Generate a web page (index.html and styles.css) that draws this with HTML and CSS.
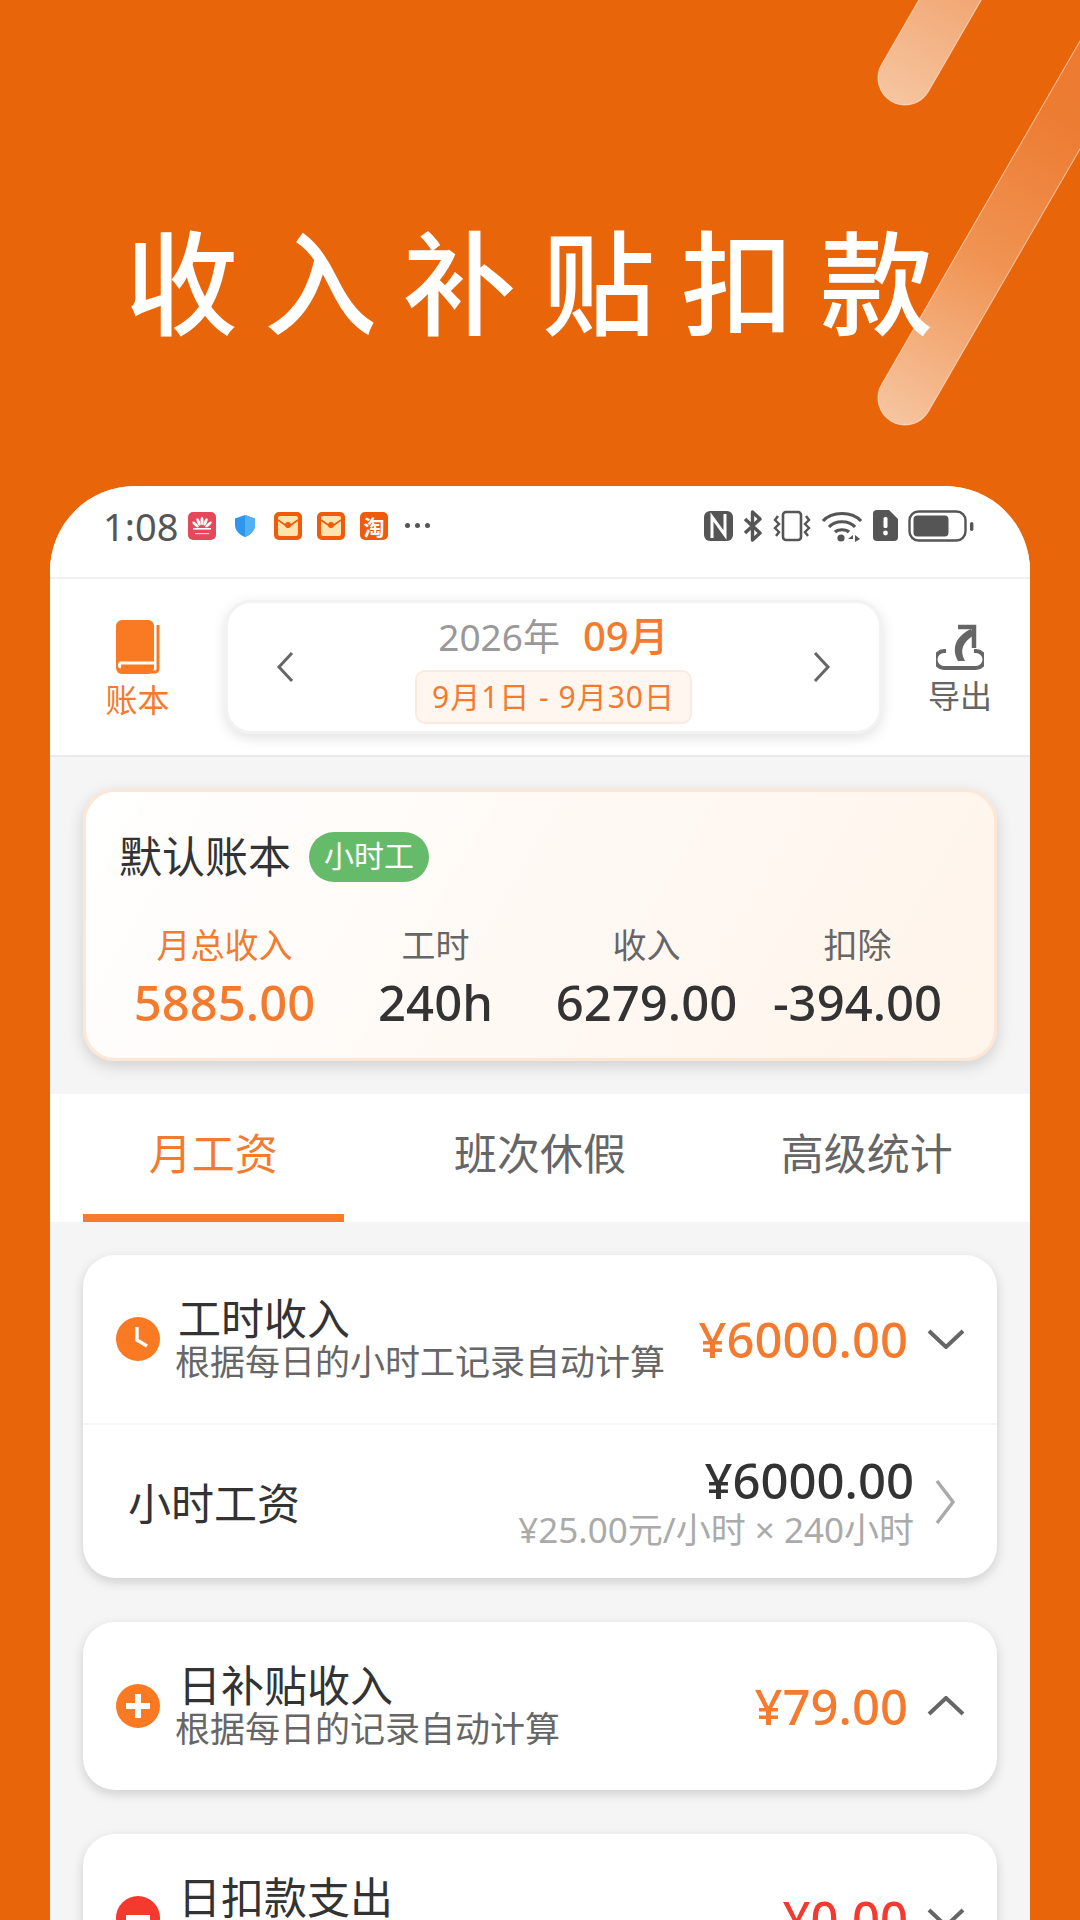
FILE: index.html
```html
<!DOCTYPE html>
<html lang="zh-CN">
<head>
  <meta charset="UTF-8" />
  <meta name="viewport" content="width=device-width, initial-scale=1" />
  <title>收入补贴扣款</title>
  <link rel="stylesheet" href="styles.css">
</head>
<body>

<header class="hero">
  <svg class="stripes" viewBox="0 0 1080 486">
    <defs>
      <linearGradient id="stripe-short" x1="0" y1="1" x2="0" y2="0">
        <stop offset="0" stop-color="#f6c5a0" />
        <stop offset="1" stop-color="#ed8a48" />
      </linearGradient>
      <linearGradient id="stripe-long" x1="0" y1="1" x2="0" y2="0">
        <stop offset="0" stop-color="#f6c5a0" />
        <stop offset="0.3" stop-color="#f09352" />
        <stop offset="0.55" stop-color="#ed7c33" />
        <stop offset="1" stop-color="#ec762a" />
      </linearGradient>
    </defs>
    <rect class="stripe-rect" transform="translate(905 78) rotate(30)" x="-27" y="-230" width="54" height="257" rx="27" fill="url(#stripe-short)" />
    <rect class="stripe-rect" transform="translate(905 398) rotate(30)" x="-27" y="-600" width="54" height="627" rx="27" fill="url(#stripe-long)" />
  </svg>
  <h1>收入补贴扣款</h1>
</header>

<main class="phone">
  <div class="status-bar">
    <div class="status-left">
      <span class="time">1:08</span>
      <svg class="note" viewBox="0 0 28 28">
        <rect width="28" height="28" rx="5" fill="#e5485a" />
        <g fill="#fff">
          <ellipse cx="14" cy="9" rx="1.5" ry="4" />
          <ellipse cx="10.5" cy="10" rx="1.5" ry="4" transform="rotate(-22 10.5 10)" />
          <ellipse cx="17.5" cy="10" rx="1.5" ry="4" transform="rotate(22 17.5 10)" />
          <ellipse cx="7.5" cy="12.5" rx="1.5" ry="4" transform="rotate(-48 7.5 12.5)" />
          <ellipse cx="20.5" cy="12.5" rx="1.5" ry="4" transform="rotate(48 20.5 12.5)" />
          <rect x="5" y="16" width="18" height="1.6" />
          <rect x="7" y="21" width="14" height="1.2" opacity="0.7" />
        </g>
      </svg>
      <svg class="note shield" viewBox="0 0 20 22">
        <path d="M10 0 L20 3.5 V10 C20 16 15 20 10 22 C5 20 0 16 0 10 V3.5 Z" fill="#2f96ee" />
        <path d="M10 0 L20 3.5 V10 C20 16 15 20 10 22 Z" fill="#52b0f5" />
      </svg>
      <svg class="note" viewBox="0 0 28 28">
        <rect width="28" height="28" rx="5" fill="#f05a0a" />
        <rect x="4" y="4" width="20" height="20" rx="2" fill="#fde4ae" />
        <path d="M4 8 L14 15 L24 8" fill="none" stroke="#f05a0a" stroke-width="1.6" />
        <circle cx="14" cy="13" r="3" fill="#f05a0a" />
      </svg>
      <svg class="note" viewBox="0 0 28 28">
        <rect width="28" height="28" rx="5" fill="#f05a0a" />
        <rect x="4" y="4" width="20" height="20" rx="2" fill="#fde4ae" />
        <path d="M4 8 L14 15 L24 8" fill="none" stroke="#f05a0a" stroke-width="1.6" />
        <circle cx="14" cy="13" r="3" fill="#f05a0a" />
      </svg>
      <span class="taobao">淘</span>
      <span class="more"><i></i><i></i><i></i></span>
    </div>
    <div class="status-right">
      <svg class="sys nfc" viewBox="0 0 29 30">
        <rect width="29" height="30" rx="6" fill="#555" />
        <path d="M8 27 V6 L21 24 V3" fill="none" stroke="#fff" stroke-width="3" />
      </svg>
      <svg class="sys bt" viewBox="0 0 20 32">
        <path d="M2 9 L17 23 L9.5 30 V2 L17 9 L2 23" fill="none" stroke="#555" stroke-width="3.4" stroke-linejoin="round" />
      </svg>
      <svg class="sys vibrate" viewBox="0 0 38 32">
        <rect x="10" y="2" width="18" height="28" rx="3" fill="none" stroke="#555" stroke-width="2.6" />
        <path d="M5 6 L2 10 L6 14 L2 18 L6 22 L3 26 M33 6 L36 10 L32 14 L36 18 L32 22 L35 26" fill="none" stroke="#555" stroke-width="2.4" />
      </svg>
      <svg class="sys wifi" viewBox="0 0 42 32">
        <path d="M2 11 C11 1 31 1 40 11 M8 17 C14 10 28 10 34 17 M14 22 C17 19 25 19 28 22" fill="none" stroke="#555" stroke-width="3.2" />
        <circle cx="20" cy="28" r="3.6" fill="#555" />
        <path d="M32 25 L27 29 L32 29 Z M34 25 L39 29 L34 32 Z" fill="#555" />
      </svg>
      <svg class="sys sim" viewBox="0 0 25 31">
        <path d="M4 0 H16 L25 9 V27 A4 4 0 0 1 21 31 H4 A4 4 0 0 1 0 27 V4 A4 4 0 0 1 4 0 Z" fill="#555" />
        <rect x="10.5" y="7" width="4" height="11" rx="1.5" fill="#fff" />
        <circle cx="12.5" cy="23" r="2.4" fill="#fff" />
      </svg>
      <svg class="sys battery" viewBox="0 0 66 32">
        <rect x="1.5" y="1.5" width="56" height="29" rx="9" fill="none" stroke="#555" stroke-width="2.4" />
        <rect x="5.5" y="5.5" width="35" height="21" rx="4" fill="#555" />
        <rect x="62" y="12" width="3.4" height="9" rx="1.7" fill="#555" />
      </svg>
    </div>
  </div>

  <div class="top-nav">
    <div class="nav-btn nav-btn-left active">
      <svg class="book" viewBox="0 0 44 54">
        <rect x="0" y="0" width="38" height="54" rx="6" fill="#f97a22" />
        <rect x="38" y="5" width="6" height="47" fill="#fff" />
        <path d="M42 5 V49 A3 3 0 0 1 39 52 H6" fill="none" stroke="#f97a22" stroke-width="3" />
        <path d="M5 47 A1 1 0 0 1 6 43 H38" fill="none" stroke="#fff" stroke-width="3" />
      </svg>
      <span>账本</span>
    </div>
    <div class="date-box">
      <svg class="date-arrow" viewBox="0 0 18 32"><path d="M16 2 L3 16 L16 30" /></svg>
      <div class="date-mid">
        <div class="date-line"><span class="year">2026年</span><span class="month">09月</span></div>
        <div class="range">9月1日 - 9月30日</div>
      </div>
      <svg class="date-arrow" viewBox="0 0 18 32"><path d="M2 2 L15 16 L2 30" /></svg>
    </div>
    <div class="nav-btn nav-btn-right">
      <svg class="export" viewBox="0 0 48 46">
        <path d="M10 27 H8 A8 8 0 0 0 8 44 H40 A8 8 0 0 0 40 27 H38" fill="none" stroke="#666" stroke-width="4" />
        <path d="M22 3 H38 V24" fill="none" stroke="#666" stroke-width="4.5" />
        <path d="M35 5 C20 12 15 24 22 37 L29 37 C23 26 27 18 38 11 Z" fill="#666" />
      </svg>
      <span>导出</span>
    </div>
  </div>

  <section class="summary-wrap">
    <div class="summary">
      <div class="summary-head">
        <span class="book-name">默认账本</span>
        <span class="badge">小时工</span>
      </div>
      <div class="summary-grid">
        <div class="stat accent"><span>月总收入</span><b>5885.00</b></div>
        <div class="stat"><span>工时</span><b>240h</b></div>
        <div class="stat"><span>收入</span><b>6279.00</b></div>
        <div class="stat"><span>扣除</span><b>-394.00</b></div>
      </div>
    </div>
  </section>

  <nav class="tabs">
    <div class="tab current">月工资</div>
    <div class="tab">班次休假</div>
    <div class="tab">高级统计</div>
  </nav>

  <section class="list">
    <div class="panel">
      <div class="panel-head">
        <svg class="round-icon" viewBox="0 0 44 44">
          <circle cx="22" cy="22" r="22" fill="#f97a22" />
          <path d="M21 10 V23 L31 29" fill="none" stroke="#fff" stroke-width="3.4" />
        </svg>
        <div class="head-text">
          <div class="head-title">工时收入</div>
          <div class="head-sub">根据每日的小时工记录自动计算</div>
        </div>
        <div class="head-amount">¥6000.00</div>
        <svg class="fold" viewBox="0 0 38 20"><path d="M2 2 L19 18 L36 2" /></svg>
      </div>
      <div class="panel-row">
        <div class="row-name">小时工资</div>
        <div class="row-right">
          <div class="row-amount">¥6000.00</div>
          <div class="row-note">¥25.00元/小时 × 240小时</div>
        </div>
        <svg class="row-arrow" viewBox="0 0 20 46"><path d="M2 2 L18 23 L2 44" /></svg>
      </div>
    </div>

    <div class="panel">
      <div class="panel-head">
        <svg class="round-icon" viewBox="0 0 44 44">
          <circle cx="22" cy="22" r="22" fill="#f97a22" />
          <path d="M22 10 V34 M10 22 H34" fill="none" stroke="#fff" stroke-width="6" />
        </svg>
        <div class="head-text">
          <div class="head-title">日补贴收入</div>
          <div class="head-sub">根据每日的记录自动计算</div>
        </div>
        <div class="head-amount">¥79.00</div>
        <svg class="fold" viewBox="0 0 38 20"><path d="M2 18 L19 2 L36 18" /></svg>
      </div>
    </div>

    <div class="panel">
      <div class="panel-head">
        <svg class="round-icon" viewBox="0 0 44 44">
          <circle cx="22" cy="22" r="22" fill="#f4392f" />
          <path d="M10 22 H34" fill="none" stroke="#fff" stroke-width="6" />
        </svg>
        <div class="head-text">
          <div class="head-title">日扣款支出</div>
          <div class="head-sub">根据每日的记录自动计算</div>
        </div>
        <div class="head-amount minus">-¥0.00</div>
        <svg class="fold" viewBox="0 0 38 20"><path d="M2 2 L19 18 L36 2" /></svg>
      </div>
    </div>
  </section>
</main>

</body>
</html>
```

FILE: styles.css
```css
* {
  box-sizing: border-box;
}

html, body {
  height: 1920px;
  overflow: hidden;
}

body {
  margin: 0;
  background: #e8650a;
  font-family: "Noto Sans", "Noto Sans CJK SC", sans-serif;
  color: #333;
}

.hero {
  position: relative;
  height: 486px;
  padding: 195px 0 0 125px;
}

.stripes {
  position: absolute;
  left: 0;
  top: 0;
  width: 1080px;
  height: 486px;
}

.stripe-rect {
  stroke: rgba(255, 255, 255, 0.55);
  stroke-width: 1;
}

h1 {
  position: relative;
  margin: 0;
  color: #fff;
  font-family: "Noto Sans CJK SC", sans-serif;
  font-size: 113px;
  font-weight: 500;
  line-height: 164px;
  letter-spacing: 26px;
  white-space: nowrap;
}

.phone {
  margin: 0 50px;
  height: 1434px;
  background: #f5f5f5;
  border-radius: 85px 85px 0 0;
  overflow: hidden;
}

/* status bar */
.status-bar {
  height: 93px;
  padding: 0 56px 12px 53px;
  background: #fff;
  border-bottom: 2px solid #f0f0f0;
  display: flex;
  align-items: center;
  justify-content: space-between;
}

.status-left, .status-right {
  display: flex;
  align-items: center;
}

.time {
  width: 85px;
  font-size: 38px;
  line-height: 1;
  color: #555;
}

.note {
  width: 28px;
  height: 28px;
  margin-right: 15px;
}

.shield {
  width: 20px;
  height: 22px;
  margin: 0 19px 0 4px;
}

.taobao {
  width: 28px;
  height: 28px;
  border-radius: 5px;
  background: #f05a0a;
  color: #fff;
  font-family: "Noto Sans CJK SC", sans-serif;
  font-size: 21px;
  font-weight: 700;
  line-height: 28px;
  text-align: center;
}

.more {
  display: flex;
  gap: 5px;
  margin-left: 17px;
}

.more i {
  width: 5px;
  height: 5px;
  border-radius: 50%;
  background: #555;
}

.status-right {
  gap: 10px;
}

.sys {
  display: block;
  height: 32px;
}

.nfc { width: 29px; height: 30px; }
.bt { width: 20px; }
.vibrate { width: 38px; }
.wifi { width: 42px; }
.sim { width: 25px; height: 31px; }
.battery { width: 66px; }

/* top nav */
.top-nav {
  height: 178px;
  background: #fff;
  border-bottom: 2px solid #ebebeb;
  display: flex;
  align-items: center;
}

.nav-btn {
  display: flex;
  flex-direction: column;
  align-items: center;
  gap: 8px;
  font-size: 32px;
  line-height: 36px;
  color: #666;
}

.nav-btn-left {
  width: 175px;
  padding-right: 0;
  padding-top: 4px;
}

.nav-btn-right {
  width: 148px;
  padding-left: 8px;
  padding-top: 4px;
}

.nav-btn.active {
  color: #f47a2e;
}

.book {
  width: 44px;
  height: 54px;
}

.export {
  width: 48px;
  height: 46px;
}

.date-box {
  flex: 1;
  height: 134px;
  padding: 0 48px;
  background: #fff;
  border: 3px solid #f2f2f2;
  border-radius: 26px;
  box-shadow: 0 4px 14px rgba(0, 0, 0, 0.12);
  display: flex;
  align-items: center;
  justify-content: space-between;
}

.date-arrow {
  width: 18px;
  height: 32px;
  fill: none;
  stroke: #666;
  stroke-width: 3;
}

.date-mid {
  display: flex;
  flex-direction: column;
  align-items: center;
  gap: 5px;
}

.date-line {
  display: flex;
  align-items: baseline;
  gap: 23px;
  line-height: 52px;
  height: 55px;
}

.year {
  font-size: 37px;
  color: #999;
}

.month {
  font-size: 40px;
  font-weight: 500;
  color: #f47a2e;
}

.range {
  height: 54px;
  padding: 0 15px;
  background: #fff6f0;
  border: 2px solid #fdeadf;
  border-radius: 10px;
  color: #f47a2e;
  font-size: 30px;
  letter-spacing: 1px;
  line-height: 50px;
  white-space: nowrap;
}

/* summary */
.summary-wrap {
  height: 337px;
  padding: 32px 33px 0;
}

.summary {
  height: 272px;
  padding: 40px 31px 0 33px;
  background: linear-gradient(120deg, #fff 0%, #fff9f4 50%, #fff4ea 100%);
  border: 3px solid #fde6d3;
  border-radius: 32px;
  box-shadow: 0 5px 16px rgba(0, 0, 0, 0.16);
}

.summary-head {
  display: flex;
  align-items: center;
  gap: 18px;
  height: 50px;
}

.book-name {
  font-size: 43px;
  line-height: 50px;
  color: #333;
}

.badge {
  width: 120px;
  height: 50px;
  border-radius: 25px;
  background: #66bb6a;
  color: #fff;
  font-size: 30px;
  line-height: 48px;
  text-align: center;
}

.summary-grid {
  display: grid;
  grid-template-columns: repeat(4, 1fr);
  margin-top: 40px;
}

.stat {
  display: flex;
  flex-direction: column;
  align-items: center;
  color: #666;
}

.stat span {
  font-size: 34px;
  line-height: 46px;
}

.stat b {
  margin-top: 5px;
  font-size: 49px;
  font-weight: 500;
  line-height: 58px;
  color: #333;
  white-space: nowrap;
}

.stat.accent span, .stat.accent b {
  color: #f47a2e;
}

/* tabs */
.tabs {
  height: 128px;
  background: #fff;
  display: grid;
  grid-template-columns: repeat(3, 1fr);
}

.tab {
  position: relative;
  padding-top: 32px;
  font-size: 43px;
  line-height: 56px;
  text-align: center;
  color: #666;
}

.tab.current {
  color: #f47a2e;
}

.tab.current::after {
  content: "";
  position: absolute;
  left: 33px;
  right: 33px;
  bottom: 0;
  height: 8px;
  background: #f97a2a;
}

/* list */
.list {
  padding: 33px 33px 0;
  display: flex;
  flex-direction: column;
  gap: 44px;
}

.panel {
  background: #fff;
  border-radius: 32px;
  box-shadow: 0 4px 12px rgba(0, 0, 0, 0.16);
  flex-shrink: 0;
}

.panel-head {
  height: 168px;
  padding: 0 32px 0 33px;
  display: flex;
  align-items: center;
}

.round-icon {
  width: 44px;
  height: 44px;
  flex-shrink: 0;
}

.head-text {
  flex: 1;
  margin-left: 15px;
}

.head-title {
  padding-left: 3px;
  font-size: 43px;
  line-height: 46px;
  color: #333;
}

.head-sub {
  font-size: 35px;
  line-height: 40px;
  color: #666;
}

.head-amount {
  font-size: 49px;
  font-weight: 500;
  line-height: 60px;
  color: #f47a2e;
  white-space: nowrap;
}

.head-amount.minus {
  color: #f4392f;
}

.fold {
  width: 38px;
  height: 20px;
  margin-left: 19px;
  fill: none;
  stroke: #666;
  stroke-width: 4;
}

.panel-row {
  height: 155px;
  padding: 0 42px 0 45px;
  border-top: 2px solid #f5f5f5;
  display: flex;
  align-items: center;
}

.row-name {
  flex: 1;
  font-size: 43px;
  color: #333;
}

.row-right {
  text-align: right;
}

.row-amount {
  font-size: 49px;
  font-weight: 500;
  line-height: 56px;
  color: #333;
}

.row-note {
  font-size: 35px;
  line-height: 44px;
  color: #aaa;
  white-space: nowrap;
}

.row-arrow {
  width: 20px;
  height: 46px;
  margin-left: 21px;
  fill: none;
  stroke: #aaa;
  stroke-width: 3.5;
}
```
